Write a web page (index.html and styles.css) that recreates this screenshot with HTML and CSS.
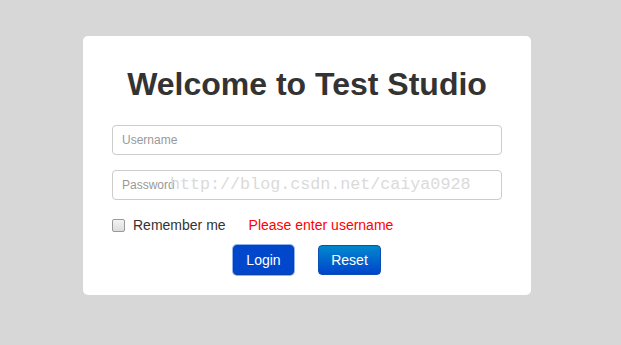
FILE: index.html
```html
<!DOCTYPE html>
<html>
<head>
<meta charset="utf-8">
<link rel="stylesheet" href="styles.css">
</head>
<body>
<div class="card">
  <h1 class="title">Welcome to Test Studio</h1>
  <form class="form">
    <input class="field" type="text" placeholder="Username">
    <div class="field-wrap">
      <input class="field" type="password" placeholder="Password">
      <span class="watermark">http://blog.csdn.net/caiya0928</span>
    </div>
    <div class="row">
      <label class="remember"><span class="check"></span>Remember me</label>
      <span class="error">Please enter username</span>
    </div>
    <div class="actions">
      <button type="button" class="btn btn-active">Login</button>
      <button type="button" class="btn">Reset</button>
    </div>
  </form>
</div>
</body>
</html>
```
FILE: styles.css
```css
html, body {
  margin: 0;
  padding: 0;
}
body {
  background: #d7d7d7;
  font-family: "Liberation Sans", Arial, sans-serif;
  width: 621px;
  height: 345px;
  overflow: hidden;
  padding-top: 36px;
  box-sizing: border-box;
}
.card {
  margin-left: 83px;
  width: 448px;
  box-sizing: border-box;
  background: #fff;
  border-radius: 5px;
  padding: 30px 29px 20px;
}
.title {
  margin: 0;
  text-align: center;
  font-size: 32px;
  line-height: 36px;
  font-weight: bold;
  color: #333;
}
.form {
  margin-top: 23px;
  display: flex;
  flex-direction: column;
}
.field-wrap {
  position: relative;
  margin-top: 15px;
}
.field {
  display: block;
  width: 390px;
  height: 30px;
  box-sizing: border-box;
  border: 1px solid #ccc;
  border-radius: 4px;
  padding: 0 9px;
  font-family: "Liberation Sans", Arial, sans-serif;
  font-size: 12px;
  color: #555;
  background: #fff;
  outline: none;
}
.field::placeholder {
  color: #999;
}
.watermark {
  position: absolute;
  left: 58px;
  top: 3px;
  font-family: "Liberation Mono", "DejaVu Sans Mono", monospace;
  font-size: 16.7px;
  line-height: 24px;
  color: #dadada;
  pointer-events: none;
}
.row {
  display: flex;
  align-items: center;
  margin-top: 16px;
  height: 18px;
  font-size: 14px;
}
.remember {
  display: flex;
  align-items: center;
  color: #333;
}
.check {
  width: 11px;
  height: 11px;
  border: 1px solid #999;
  border-radius: 2px;
  background: linear-gradient(#f4f4f4, #dcdcdc);
  margin-right: 8px;
}
.error {
  color: #ff0000;
  margin-left: 23px;
}
.actions {
  display: flex;
  justify-content: center;
  gap: 24px;
  margin-top: 11px;
}
.btn {
  width: 63px;
  height: 30px;
  box-sizing: border-box;
  border: 1px solid #0a4fb0;
  border-radius: 4px;
  color: #fff;
  font-family: "Liberation Sans", Arial, sans-serif;
  font-size: 14px;
  background: linear-gradient(#0088cc, #0044cc);
  padding: 0;
}
.btn-active {
  width: 61px;
  background: #0047cc;
  box-shadow: 0 0 0 1px #8fb4ee;
  border-color: #0a40b0;
}
```
